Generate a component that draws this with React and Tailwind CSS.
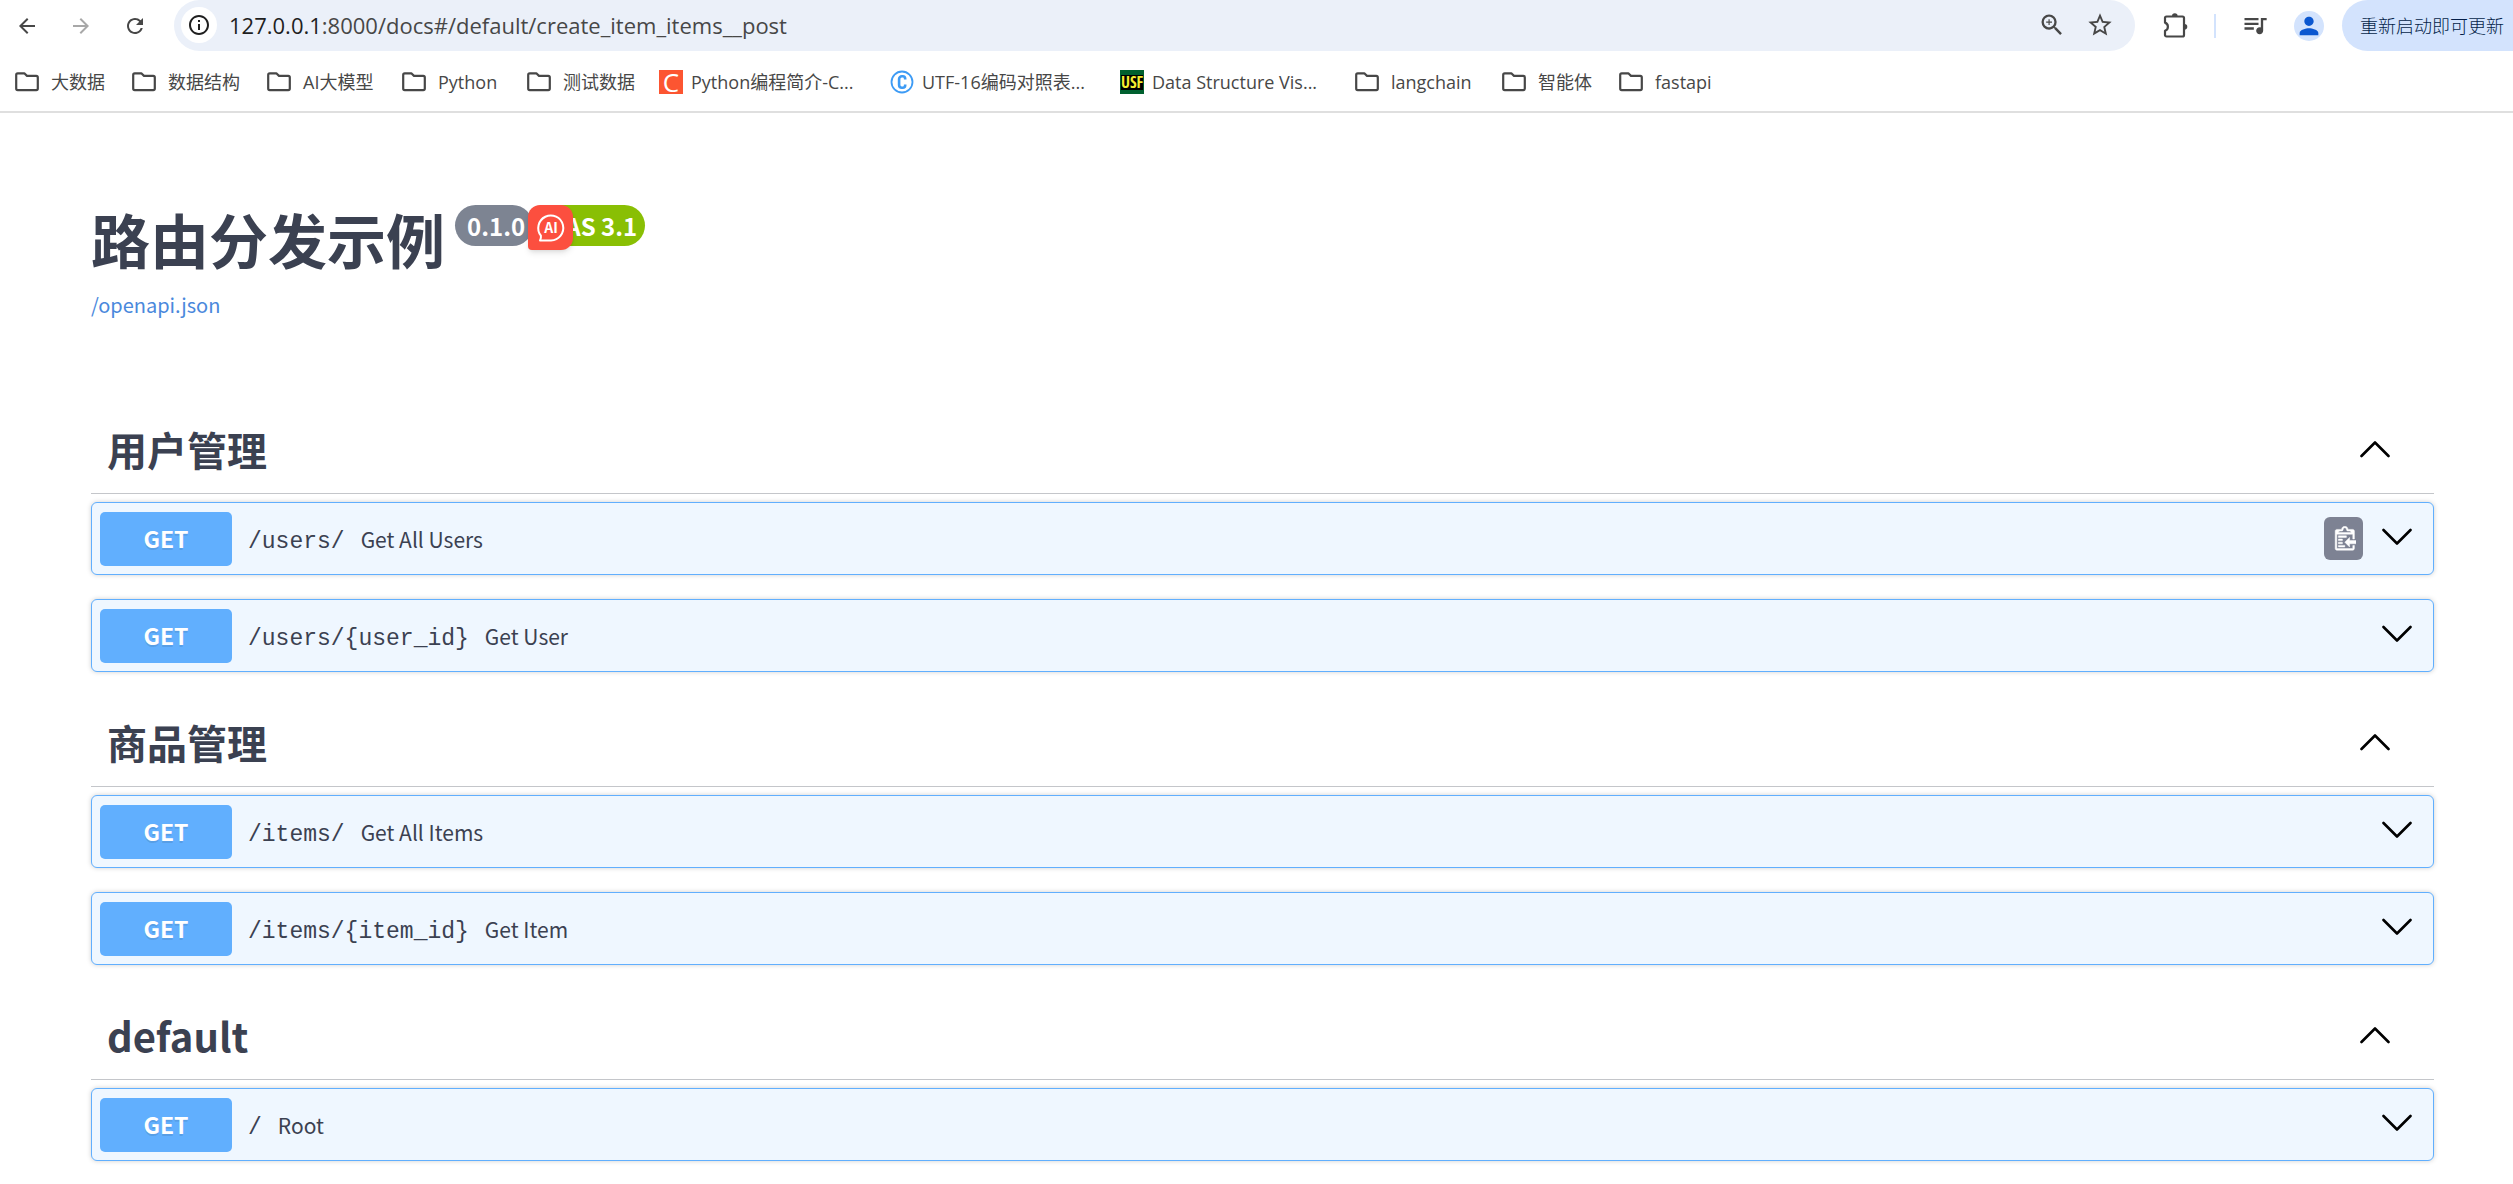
import React from 'react';
import {
    MdArrowBack,
    MdArrowForward,
    MdRefresh,
    MdInfoOutline,
    MdZoomIn,
    MdStarBorder,
    MdQueueMusic,
    MdPerson
} from 'react-icons/md';

const BOOKMARKS = [
    { label: '大数据', icon: 'folder', width: 'w-[117px]' },
    { label: '数据结构', icon: 'folder', width: 'w-[135px]' },
    { label: 'AI大模型', icon: 'folder', width: 'w-[135px]' },
    { label: 'Python', icon: 'folder', width: 'w-[125px]' },
    { label: '测试数据', icon: 'folder', width: 'w-[132px]' },
    { label: 'Python编程简介-C...', icon: 'csdn', width: 'w-[231px]' },
    { label: 'UTF-16编码对照表...', icon: 'copyright', width: 'w-[230px]' },
    { label: 'Data Structure Vis...', icon: 'usf', width: 'w-[235px]' },
    { label: 'langchain', icon: 'folder', width: 'w-[147px]' },
    { label: '智能体', icon: 'folder', width: 'w-[117px]' },
    { label: 'fastapi', icon: 'folder', width: 'w-[117px]' }
];

const SECTIONS = [
    {
        tag: '用户管理',
        operations: [
            { path: '/users/', summary: 'Get All Users', showCopy: true },
            { path: '/users/{user_id}', summary: 'Get User' }
        ]
    },
    {
        tag: '商品管理',
        operations: [
            { path: '/items/', summary: 'Get All Items' },
            { path: '/items/{item_id}', summary: 'Get Item' }
        ]
    },
    {
        tag: 'default',
        operations: [{ path: '/', summary: 'Root' }]
    }
];

function BookmarkIcon({ type }) {
    if (type === 'csdn') {
        return (
            <span className="w-6 h-6 mr-2 shrink-0 bg-[#fc5531] text-white text-[26px] leading-6 text-center font-medium">C</span>
        );
    }
    if (type === 'copyright') {
        return (
            <svg viewBox="0 0 24 24" className="w-6 h-6 mr-2 shrink-0" fill="none" stroke="#3d9bf5">
                <circle cx="12" cy="12" r="10.5" strokeWidth="1.8" />
                <path d="M15.2 9.5V8.8a2.5 2.5 0 0 0-2.5-2.500h-.9a2.700 2.700 0 0 0-2.700 2.700v6a2.700 2.700 0 0 0 2.700 2.700h.9a2.500 2.500 0 0 0 2.500-2.500v-.7" strokeWidth="2.6" />
            </svg>
        );
    }
    if (type === 'usf') {
        return (
            <span className="w-6 h-6 mr-2 shrink-0 flex items-center justify-center overflow-hidden bg-[#00602f]">
                <span className="bg-black text-[#f5ee30] text-[16px] leading-[15px] font-bold font-['Open_Sans_Condensed','Liberation_Sans_Narrow','Open_Sans',sans-serif]">USF</span>
            </span>
        );
    }
    return (
        <svg viewBox="0 0 24 20" className="w-6 h-5 mr-3 shrink-0" fill="none" stroke="#474747" strokeWidth="2.2" strokeLinejoin="round">
            <path d="M1.200 3v13.600c0 .9.600 1.500 1.500 1.500h18.600c.9 0 1.500-.6 1.500-1.500V5.400c0-.9-.6-1.500-1.500-1.500H12L9.300 1.300H2.700c-.9 0-1.500.7-1.500 1.700z" />
        </svg>
    );
}

function Toolbar() {
    return (
        <div className="flex items-center h-[51px] text-[#474747]">
            <button aria-label="Back" className="ml-[15px]"><MdArrowBack className="w-6 h-6" /></button>
            <button aria-label="Forward" className="ml-[30px] text-[#a8a8a8]"><MdArrowForward className="w-6 h-6" /></button>
            <button aria-label="Reload" className="ml-[30px]"><MdRefresh className="w-6 h-6" /></button>
            <div className="flex flex-1 items-center h-full ml-[27px] pl-[7px] pr-[21px] pb-0.5 rounded-full bg-[#ebf0f9]">
                <button aria-label="Site information" className="flex items-center justify-center w-9 h-9 rounded-full bg-white text-[#1f1f1f]">
                    <MdInfoOutline className="w-6 h-6" />
                </button>
                <div className="flex-1 ml-3 text-[22px] leading-8">
                    <span className="text-[#1f1f1f]">127.0.0.1</span>:8000/docs#/default/create_item_items__post
                </div>
                <button aria-label="Zoom" className="mr-5"><MdZoomIn className="w-7 h-7" /></button>
                <button aria-label="Bookmark this page"><MdStarBorder className="w-7 h-7" /></button>
            </div>
            <button aria-label="Extensions" className="ml-7 pb-0.5">
                <svg viewBox="0 0 26 26" className="w-[26px] h-[26px]" fill="none" stroke="currentColor" strokeWidth="2.2" strokeLinejoin="round">
                    <path d="M3.500 4.500h16c.8 0 1.500.7 1.500 1.500v17c0 .8-.7 1.500-1.500 1.500h-16c-.8 0-1.500-.7-1.500-1.500v-4.200c1.700-.6 2.900-2.200 2.900-4.100S3.700 11.200 2 10.600V6c0-.8.7-1.500 1.500-1.500z" />
                    <path d="M9 4a2.800 2.800 0 0 1 5.600 0zM21.500 12a2.800 2.800 0 0 1 0 5.600z" fill="currentColor" stroke="none" />
                </svg>
            </button>
            <span className="w-0.5 h-6 ml-[25px] bg-[#d3e3fd]" />
            <button aria-label="Media controls" className="ml-[25px] pb-0.5"><MdQueueMusic className="w-7 h-7" /></button>
            <button aria-label="Profile" className="flex items-center justify-center w-[30px] h-[30px] ml-[25px] rounded-full bg-[#d3e3fd] text-[#0b57d0]">
                <MdPerson className="w-7 h-7" />
            </button>
            <button className="h-full ml-[18px] pl-[18px] pr-[9px] rounded-l-full bg-[#d3e3fd] text-[#041e49] text-lg font-light">重新启动即可更新</button>
        </div>
    );
}

function BookmarksBar() {
    return (
        <nav className="flex items-center h-[62px] pt-0.5 pl-[15px] border-b-2 border-[#dfdfdf] text-[#474747] text-lg">
            {BOOKMARKS.map((bookmark) => (
                <a key={bookmark.label} href="#" className={`flex items-center shrink-0 whitespace-nowrap ${bookmark.width}`}>
                    <BookmarkIcon type={bookmark.icon} />
                    {bookmark.label}
                </a>
            ))}
        </nav>
    );
}

function Chevron({ up }) {
    return (
        <svg viewBox="0 0 30 18" className="w-[30px] h-[18px]" fill="none" stroke="#000" strokeWidth="2.6" strokeLinecap="round" strokeLinejoin="round">
            <path d={up ? 'M1.500 16 15 2.500 28.500 16' : 'M1.500 2 15 15.500 28.500 2'} />
        </svg>
    );
}

function CopyIcon() {
    return (
        <svg viewBox="0 0 15 16" className="w-6 h-[26px]" fill="#fff" stroke="#fff" strokeWidth="0.3" fillRule="evenodd">
            <path d="M4 12h4v1H4v-1zm5-6H4v1h5V6zm2 3V7l-3 3 3 3v-2h5V9h-5zM6.500 8H4v1h2.500V8zM4 11h2.500v-1H4v1zm9 1h1v2c-.02.28-.11.52-.3.700-.19.180-.42.280-.7.300H3c-.55 0-1-.45-1-1V3c0-.55.45-1 1-1h3c0-1.110.89-2 2-2 1.110 0 2 .89 2 2h3c.55 0 1 .45 1 1v5h-1V5H3v9h10v-2zM4 4h8c0-.55-.45-1-1-1h-1c-.55 0-1-.45-1-1s-.45-1-1-1-1 .45-1 1-.45 1-1 1H5c-.55 0-1 .45-1 1z" />
        </svg>
    );
}

function Operation({ path, summary, showCopy }) {
    return (
        <div className="flex items-center h-[73px] mb-6 pl-2 pr-[21px] rounded-md border border-[#61affe] bg-[#eff7ff] shadow-[0_0_5px_rgba(0,0,0,0.19)]">
            <button className="flex flex-1 items-center text-left">
                <span className="w-[132px] pt-[9px] pb-[11px] rounded-[5px] bg-[#61affe] text-white text-[23px] leading-[34px] text-center font-bold [text-shadow:0_2px_0_rgba(0,0,0,0.1)]">GET</span>
                <span className="flex items-baseline gap-4 ml-4 pt-1.5 text-[21px]">
                    <span className="font-['Liberation_Mono',monospace] text-[23px]">{path}</span>
                    <span>{summary}</span>
                </span>
            </button>
            {showCopy && (
                <button aria-label="Copy to clipboard" className="flex items-center justify-center w-[39px] h-[43px] mr-[19px] rounded-md bg-[#7d8293]">
                    <CopyIcon />
                </button>
            )}
            <button aria-label="Expand operation" className="pb-1"><Chevron /></button>
        </div>
    );
}

function TagSection({ tag, operations }) {
    return (
        <section>
            <div className="flex items-center justify-between h-[91px] mb-2 pt-0.5 pl-4 pr-[44px] border-b border-[#3b4151]/30">
                <h3 className="text-[40px] leading-[60px] font-bold">{tag}</h3>
                <button aria-label={`Collapse ${tag}`}><Chevron up /></button>
            </div>
            {operations.map((operation) => (
                <Operation key={operation.path} {...operation} />
            ))}
        </section>
    );
}

function Info() {
    return (
        <header className="pt-[86px] pb-[78px]">
            <div className="flex items-start">
                <h2 className="text-[59px] leading-[80px] font-bold">路由分发示例</h2>
                <div className="relative flex mt-[6px] ml-[10px] text-white text-2xl font-bold leading-[41px]">
                    <span className="pl-3 pr-2 rounded-full bg-[#7d8492]">0.1.0</span>
                    <span className="pl-[14px] pr-2 rounded-full bg-[#89bf04]">OAS 3.1</span>
                    {/* Assistant bubble floating over the version badges */}
                    <button aria-label="AI assistant" className="absolute left-[73px] top-0 flex items-center justify-center w-[45px] h-[45px] rounded-xl rounded-bl-sm bg-[#fc4f3f] shadow-md">
                        <svg viewBox="0 0 30 30" className="w-[30px] h-[30px]" fill="none" stroke="#fff" strokeWidth="2">
                            <path d="M4 27.500c.8-1.500 1.200-3 .9-4.800A12.500 12.500 0 1 1 15 27.500z" strokeLinejoin="round" />
                            <text x="15" y="20" textAnchor="middle" fill="#fff" stroke="none" className="text-[14px] font-bold">AI</text>
                        </svg>
                    </button>
                </div>
            </div>
            <a href="/openapi.json" className="block pt-1.5 text-[20px] leading-[40px] text-[#4a88dc]">/openapi.json</a>
        </header>
    );
}

export default function App() {
    return (
        <div className="bg-white">
            <div className="font-['Open_Sans','Noto_Sans_CJK_SC',sans-serif]">
                <Toolbar />
                <BookmarksBar />
            </div>
            <main className="pl-[91px] pr-[79px] text-[#3b4151] font-['Noto_Sans_CJK_SC',sans-serif]">
                <Info />
                {SECTIONS.map((section) => (
                    <TagSection key={section.tag} {...section} />
                ))}
            </main>
        </div>
    );
}
